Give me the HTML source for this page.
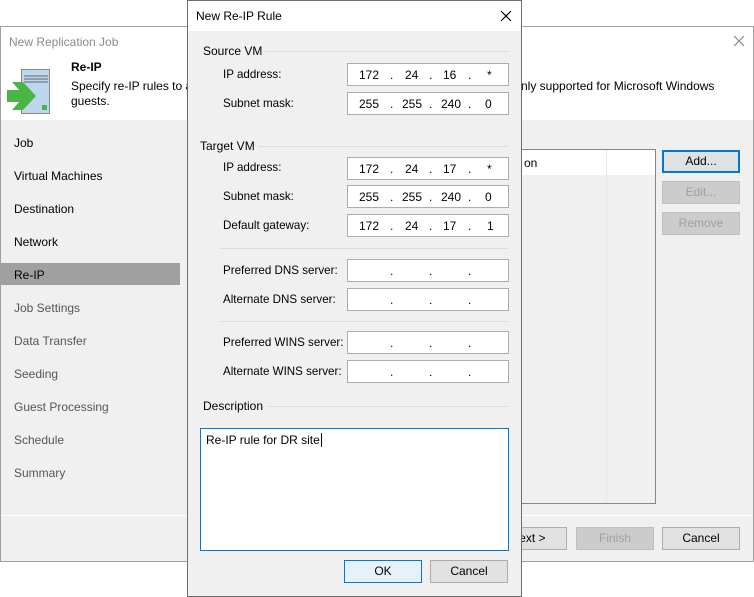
<!DOCTYPE html>
<html><head><meta charset="utf-8"><style>
*{margin:0;padding:0;box-sizing:border-box}
body{width:754px;height:597px;position:relative;background:#fff;font-family:"Liberation Sans",sans-serif;font-size:12px;color:#000;overflow:hidden}
.a{position:absolute;white-space:nowrap}
.nav{position:absolute;left:14px;font-size:12px}
.inp{position:absolute;left:347px;width:162px;height:23px;background:#fff;border:1px solid #abadb3}
.seg{position:absolute;top:4px;font-size:12px}
.ln{position:absolute;height:1px;background:#dcdcdc}
.btn{position:absolute;height:23px;border:1px solid #adadad;background:#e1e1e1;text-align:center;line-height:21px}
.dis{background:#cccccc;border-color:#bfbfbf;color:#a0a0a0}
.lb{position:absolute;left:223px;font-size:11.6px;white-space:nowrap}
</style></head><body>
<!-- main window -->
<div class="a" style="left:0;top:26px;width:754px;height:536px;border:1px solid #a0a0a0;background:#f0f0f0"></div>
<div class="a" style="left:1px;top:27px;width:752px;height:93px;background:#fff"></div>
<div class="a" style="left:9px;top:35px;color:#8a8a8a;font-size:12px">New Replication Job</div>
<svg class="a" style="left:733px;top:35px" width="12" height="12"><path d="M1 1L11 11M11 1L1 11" stroke="#888" stroke-width="1.2"/></svg>
<svg class="a" style="left:6px;top:68px" width="46" height="48">
<rect x="15.5" y="1.5" width="28" height="44" fill="#bcd6ee" stroke="#888"/>
<line x1="18" y1="8" x2="42" y2="8" stroke="#666"/><line x1="18" y1="11" x2="42" y2="11" stroke="#666"/><line x1="18" y1="14" x2="42" y2="14" stroke="#666"/>
<rect x="36" y="37" width="5" height="5" fill="#4caf50"/>
<polygon points="1,22 13,22 6,14 17,14 30,28 17,42 6,42 13,34 1,34" fill="#4bb543"/>
</svg>
<div class="a" style="left:71px;top:60px;font-weight:bold">Re-IP</div>
<div class="a" style="left:71px;top:79px">Specify re-IP rules to a</div>
<div class="a" style="left:71px;top:94px">guests.</div>
<div class="a" style="left:521px;top:79px">nly supported for Microsoft Windows</div>
<div class="a" style="left:1px;top:120px;width:179px;height:395px;background:#f0f0f0"></div>
<div class="a" style="left:1px;top:263px;width:179px;height:22px;background:#a0a0a0"></div>
<div class="nav" style="top:136px">Job</div>
<div class="nav" style="top:169px">Virtual Machines</div>
<div class="nav" style="top:202px">Destination</div>
<div class="nav" style="top:235px">Network</div>
<div class="nav" style="top:268px">Re-IP</div>
<div class="nav" style="top:301px;color:#555">Job Settings</div>
<div class="nav" style="top:334px;color:#555">Data Transfer</div>
<div class="nav" style="top:367px;color:#555">Seeding</div>
<div class="nav" style="top:400px;color:#555">Guest Processing</div>
<div class="nav" style="top:433px;color:#555">Schedule</div>
<div class="nav" style="top:466px;color:#555">Summary</div>
<div class="a" style="left:1px;top:515px;width:752px;height:1px;background:#fff"></div>
<div class="a" style="left:490px;top:149px;width:166px;height:355px;border:1px solid #828790;background:#f0f0f0"></div>
<div class="a" style="left:491px;top:150px;width:164px;height:25px;background:#fff"></div>
<div class="a" style="left:524px;top:156px">on</div>
<div class="a" style="left:606px;top:150px;width:1px;height:353px;background:#e2e8f0"></div>
<div class="btn" style="left:662px;top:150px;width:78px;border:2px solid #0078d7;line-height:19px">Add...</div>
<div class="btn dis" style="left:662px;top:181px;width:78px">Edit...</div>
<div class="btn dis" style="left:662px;top:212px;width:78px">Remove</div>
<div class="btn" style="left:489px;top:527px;width:78px">Next &gt;</div>
<div class="btn dis" style="left:576px;top:527px;width:78px">Finish</div>
<div class="btn" style="left:662px;top:527px;width:78px">Cancel</div>
<!-- dialog -->
<div class="a" style="left:187px;top:0;width:335px;height:597px;border:1px solid #6d6d6d;background:#f0f0f0"></div>
<div class="a" style="left:188px;top:1px;width:333px;height:30px;background:#fff"></div>
<div class="a" style="left:196px;top:9px">New Re-IP Rule</div>
<svg class="a" style="left:500px;top:10px" width="12" height="12"><path d="M1 1L11 11M11 1L1 11" stroke="#000" stroke-width="1.2"/></svg>
<div class="a" style="left:203px;top:44px">Source VM</div><div class="ln" style="left:265px;top:51px;width:243px"></div>
<div class="a" style="left:200px;top:139px">Target VM</div><div class="ln" style="left:258px;top:146px;width:250px"></div>
<div class="ln" style="left:220px;top:248px;width:288px"></div>
<div class="ln" style="left:220px;top:321px;width:288px"></div>
<div class="a" style="left:203px;top:399px">Description</div><div class="ln" style="left:268px;top:406px;width:240px"></div>
<div class="lb" style="top:68px">IP address:</div>
<div class="lb" style="top:97px">Subnet mask:</div>
<div class="lb" style="top:161px">IP address:</div>
<div class="lb" style="top:190px">Subnet mask:</div>
<div class="lb" style="top:219px">Default gateway:</div>
<div class="lb" style="top:264px">Preferred DNS server:</div>
<div class="lb" style="top:293px">Alternate DNS server:</div>
<div class="lb" style="top:336px">Preferred WINS server:</div>
<div class="lb" style="top:365px">Alternate WINS server:</div>
<div class="inp" style="top:63px"><span class="seg" style="left:11px">172</span><span class="seg" style="left:42px">.</span><span class="seg" style="left:57px">24</span><span class="seg" style="left:81px">.</span><span class="seg" style="left:95px">16</span><span class="seg" style="left:120px">.</span><span class="seg" style="left:139px">*</span></div>
<div class="inp" style="top:92px"><span class="seg" style="left:11px">255</span><span class="seg" style="left:42px">.</span><span class="seg" style="left:54px">255</span><span class="seg" style="left:81px">.</span><span class="seg" style="left:93px">240</span><span class="seg" style="left:120px">.</span><span class="seg" style="left:137px">0</span></div>
<div class="inp" style="top:157px"><span class="seg" style="left:11px">172</span><span class="seg" style="left:42px">.</span><span class="seg" style="left:57px">24</span><span class="seg" style="left:81px">.</span><span class="seg" style="left:95px">17</span><span class="seg" style="left:120px">.</span><span class="seg" style="left:139px">*</span></div>
<div class="inp" style="top:185px"><span class="seg" style="left:11px">255</span><span class="seg" style="left:42px">.</span><span class="seg" style="left:54px">255</span><span class="seg" style="left:81px">.</span><span class="seg" style="left:93px">240</span><span class="seg" style="left:120px">.</span><span class="seg" style="left:137px">0</span></div>
<div class="inp" style="top:214px"><span class="seg" style="left:11px">172</span><span class="seg" style="left:42px">.</span><span class="seg" style="left:57px">24</span><span class="seg" style="left:81px">.</span><span class="seg" style="left:95px">17</span><span class="seg" style="left:120px">.</span><span class="seg" style="left:139px">1</span></div>
<div class="inp" style="top:259px"><span class="seg" style="left:42px">.</span><span class="seg" style="left:81px">.</span><span class="seg" style="left:120px">.</span></div>
<div class="inp" style="top:288px"><span class="seg" style="left:42px">.</span><span class="seg" style="left:81px">.</span><span class="seg" style="left:120px">.</span></div>
<div class="inp" style="top:331px"><span class="seg" style="left:42px">.</span><span class="seg" style="left:81px">.</span><span class="seg" style="left:120px">.</span></div>
<div class="inp" style="top:360px"><span class="seg" style="left:42px">.</span><span class="seg" style="left:81px">.</span><span class="seg" style="left:120px">.</span></div>
<div class="a" style="left:200px;top:428px;width:309px;height:123px;background:#fff;border:1px solid #0078d7;padding:4px 5px">Re-IP rule for DR site<span style="border-left:1px solid #000;margin-left:1px"></span></div>
<div class="btn" style="left:344px;top:560px;width:78px;border-color:#0078d7;background:#e5f1fb">OK</div>
<div class="btn" style="left:430px;top:560px;width:78px">Cancel</div>
</body></html>
